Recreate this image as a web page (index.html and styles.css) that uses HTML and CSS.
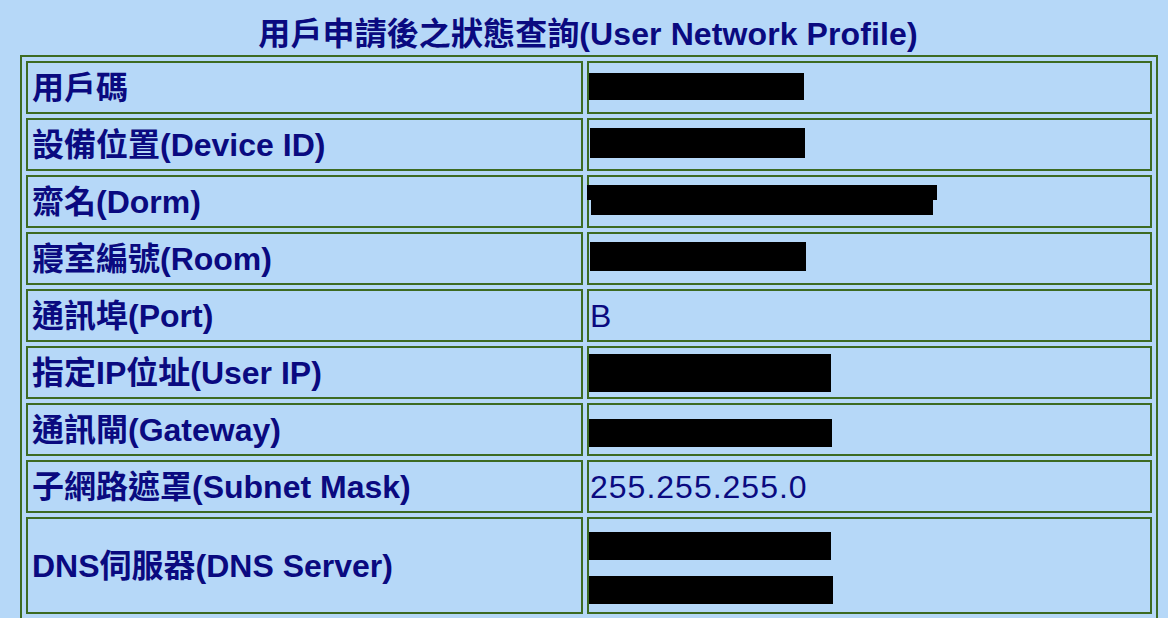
FILE: index.html
```html
<!DOCTYPE html>
<html lang="zh-Hant">
<head>
<meta charset="utf-8">
<title>用戶申請後之狀態查詢</title>
<link rel="stylesheet" href="styles.css">
</head>
<body>
<div class="page">
  <h1 class="title">用戶申請後之狀態查詢(User Network Profile)</h1>
  <table class="profile">
    <colgroup><col class="col-label"><col class="col-value"></colgroup>
    <tr>
      <td class="label">用戶碼</td>
      <td class="value"><span class="redact r1"></span></td>
    </tr>
    <tr>
      <td class="label">設備位置(Device ID)</td>
      <td class="value"><span class="redact r2"></span></td>
    </tr>
    <tr>
      <td class="label">齋名(Dorm)</td>
      <td class="value"><span class="redact r3a"></span><span class="redact r3b"></span></td>
    </tr>
    <tr>
      <td class="label">寢室編號(Room)</td>
      <td class="value"><span class="redact r4"></span></td>
    </tr>
    <tr>
      <td class="label">通訊埠(Port)</td>
      <td class="value text">B</td>
    </tr>
    <tr>
      <td class="label">指定IP位址(User IP)</td>
      <td class="value"><span class="redact r6"></span></td>
    </tr>
    <tr>
      <td class="label">通訊閘(Gateway)</td>
      <td class="value"><span class="redact r7"></span></td>
    </tr>
    <tr>
      <td class="label">子網路遮罩(Subnet Mask)</td>
      <td class="value text">255.255.255.0</td>
    </tr>
    <tr class="tall">
      <td class="label">DNS伺服器(DNS Server)</td>
      <td class="value"><span class="redact r9a"></span><span class="redact r9b"></span></td>
    </tr>
  </table>
</div>
</body>
</html>
```

FILE: styles.css
```css
html, body {
  margin: 0;
  padding: 0;
  background: #b6d8f8;
}

.page {
  padding: 14px 0 0 20px;
  font-family: "Liberation Sans", "Noto Sans CJK TC", sans-serif;
  color: #0a0a80;
}

.title {
  width: 1136px;
  margin: 0;
  height: 41px;
  line-height: 40px;
  font-size: 32px;
  font-weight: bold;
  text-align: center;
  letter-spacing: 0.1px;
}

.profile {
  width: 1136px;
  table-layout: fixed;
  border-collapse: separate;
  border-spacing: 4px;
  border: 2px solid #3d6b22;
}

.col-label { width: 557px; }
.col-value { width: 565px; }

.profile td {
  box-sizing: border-box;
  height: 53px;
  border: 2px solid #3d6b22;
  vertical-align: middle;
  font-size: 32px;
  line-height: 38px;
  padding: 0;
}

.profile tr.tall td {
  height: 97px;
}

.label {
  font-weight: bold;
  padding-left: 4px !important;
}

.value.text {
  padding-left: 1px !important;
  letter-spacing: 1px;
}

.redact {
  display: block;
  background: #000;
}

.r1 { width: 215px; height: 27px; margin-top: -2px; }
.r2 { width: 215px; height: 30px; margin-left: 1px; margin-top: -3px; }
.r3a { width: 350px; height: 15px; margin-left: -2px; margin-top: -3px; }
.r3b { width: 342px; height: 15px; margin-left: 2px; }
.r4 { width: 216px; height: 29px; margin-left: 1px; margin-top: -4px; }
.r6 { width: 242px; height: 38px; }
.r7 { width: 243px; height: 28px; margin-top: 6px; }
.r9a { width: 242px; height: 28px; margin-top: 4px; }
.r9b { width: 244px; height: 28px; margin-top: 16px; }
```
